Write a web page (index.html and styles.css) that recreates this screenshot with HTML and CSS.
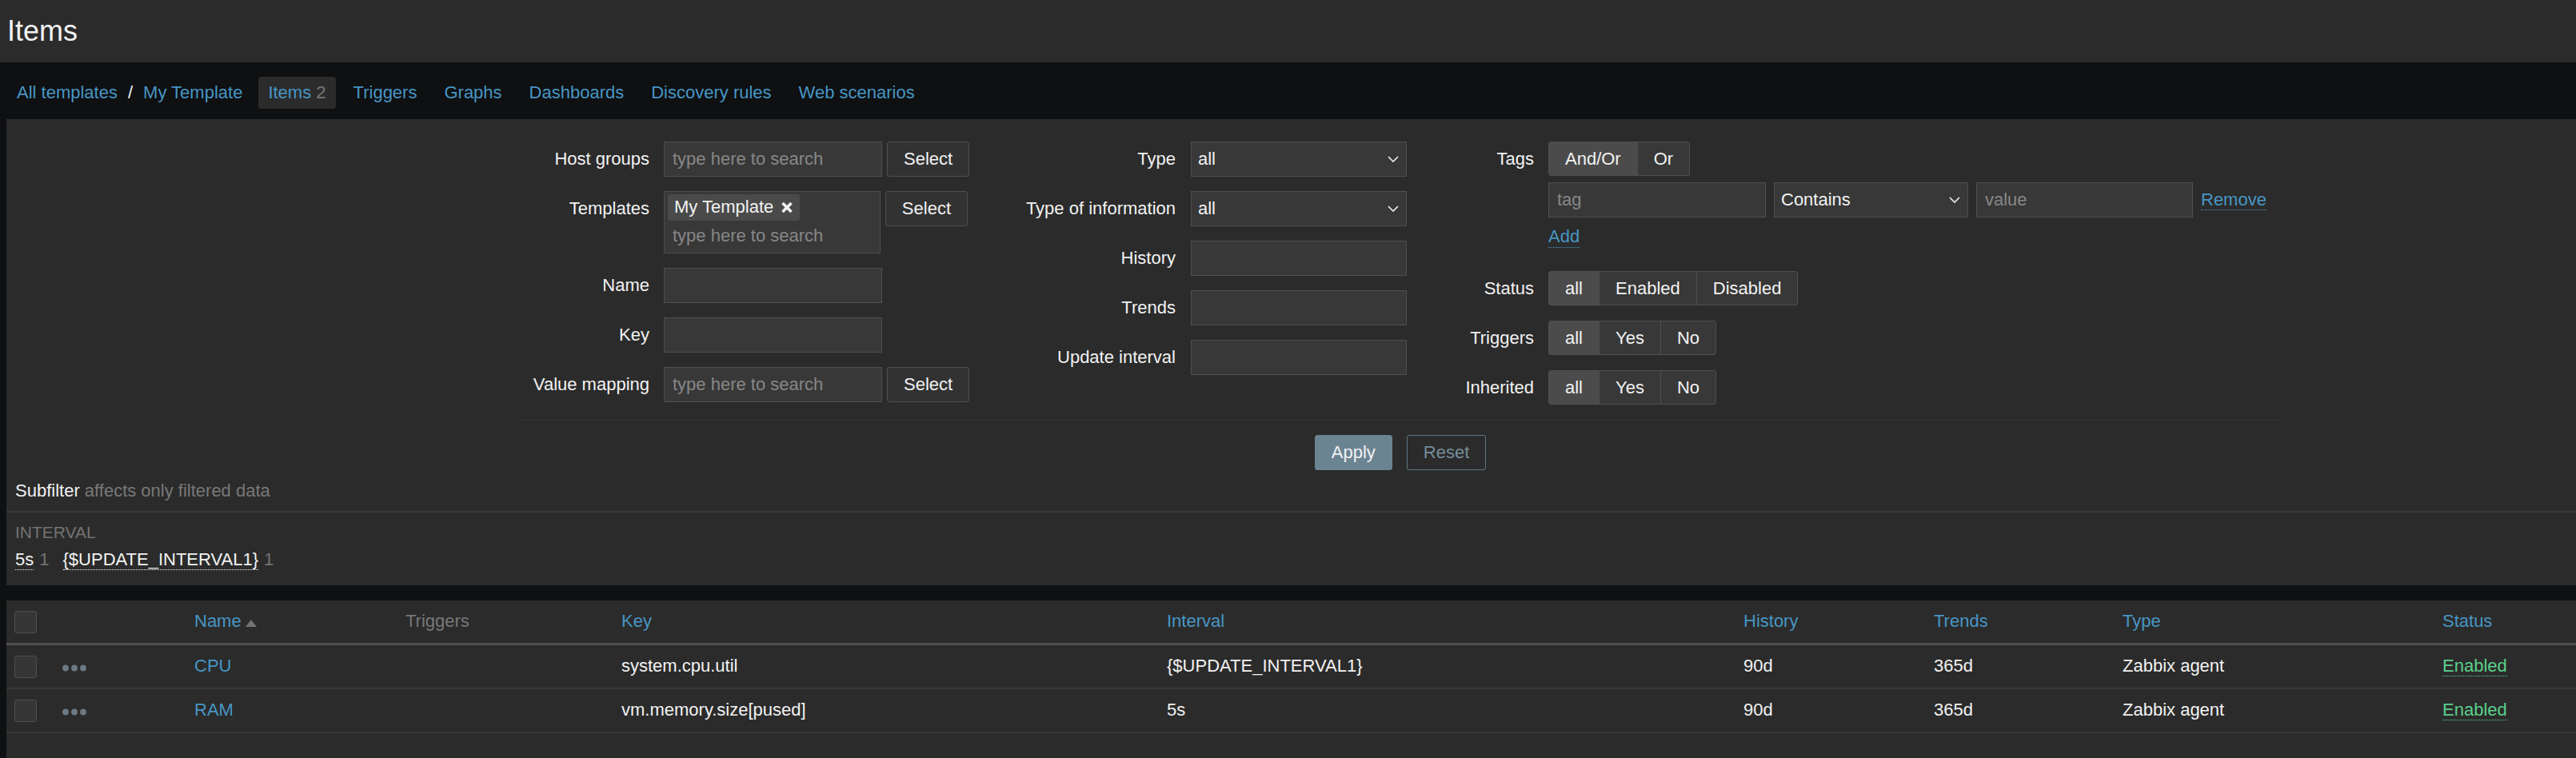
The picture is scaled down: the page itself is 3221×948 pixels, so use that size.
FILE: index.html
```html
<!DOCTYPE html>
<html lang="en">
<head>
<meta charset="utf-8">
<title>Items</title>
<link rel="stylesheet" href="styles.css">
</head>
<body>
<div class="page">
  <header class="header-title"><h1>Items</h1></header>

  <nav class="host-nav">
    <ul class="breadcrumbs">
      <li><a href="#">All templates</a></li>
      <li class="sep">/</li>
      <li><a href="#">My Template</a></li>
    </ul>
    <ul class="tabs">
      <li class="selected"><a href="#">Items</a> <span class="count">2</span></li>
      <li><a href="#">Triggers</a></li>
      <li><a href="#">Graphs</a></li>
      <li><a href="#">Dashboards</a></li>
      <li><a href="#">Discovery rules</a></li>
      <li><a href="#">Web scenarios</a></li>
    </ul>
  </nav>

  <main class="content">
    <section class="filter">
      <form class="filter-form">
        <div class="fcol col1">
          <label class="flabel">Host groups</label>
          <div class="field">
            <input class="input w273" type="text" placeholder="type here to search">
            <button type="button" class="btn-grey">Select</button>
          </div>

          <label class="flabel">Templates</label>
          <div class="field">
            <div class="multiselect">
              <span class="chip">My Template
                <svg class="chip-x" width="16" height="15" viewBox="0 0 16 15"><path d="M2.5 2l11 11M13.5 2l-11 11" stroke="#f2f2f2" stroke-width="3.6" stroke-linecap="butt"/></svg>
              </span>
              <input class="ms-input" type="text" placeholder="type here to search">
            </div>
            <button type="button" class="btn-grey">Select</button>
          </div>

          <label class="flabel">Name</label>
          <div class="field"><input class="input w273" type="text"></div>

          <label class="flabel">Key</label>
          <div class="field"><input class="input w273" type="text"></div>

          <label class="flabel">Value mapping</label>
          <div class="field">
            <input class="input w273" type="text" placeholder="type here to search">
            <button type="button" class="btn-grey">Select</button>
          </div>
        </div>

        <div class="fcol col2">
          <label class="flabel">Type</label>
          <div class="field">
            <div class="select w270"><span>all</span>
              <svg width="14" height="8" viewBox="0 0 14 8"><path d="M1 1l6 6 6-6" fill="none" stroke="#f2f2f2" stroke-width="1.6"/></svg>
            </div>
          </div>

          <label class="flabel">Type of information</label>
          <div class="field">
            <div class="select w270"><span>all</span>
              <svg width="14" height="8" viewBox="0 0 14 8"><path d="M1 1l6 6 6-6" fill="none" stroke="#f2f2f2" stroke-width="1.6"/></svg>
            </div>
          </div>

          <label class="flabel">History</label>
          <div class="field"><input class="input w270" type="text"></div>

          <label class="flabel">Trends</label>
          <div class="field"><input class="input w270" type="text"></div>

          <label class="flabel">Update interval</label>
          <div class="field"><input class="input w270" type="text"></div>
        </div>

        <div class="fcol col3">
          <label class="flabel">Tags</label>
          <div class="field tags-field">
            <div class="radio">
              <span class="on">And/Or</span><span>Or</span>
            </div>
            <div class="tag-row">
              <input class="input w272" type="text" placeholder="tag">
              <div class="select w243"><span>Contains</span>
                <svg width="14" height="8" viewBox="0 0 14 8"><path d="M1 1l6 6 6-6" fill="none" stroke="#f2f2f2" stroke-width="1.6"/></svg>
              </div>
              <input class="input w271" type="text" placeholder="value">
              <a href="#" class="link-action">Remove</a>
            </div>
            <div class="add-row"><a href="#" class="link-action">Add</a></div>
          </div>

          <label class="flabel">Status</label>
          <div class="field">
            <div class="radio"><span class="on">all</span><span>Enabled</span><span>Disabled</span></div>
          </div>

          <label class="flabel">Triggers</label>
          <div class="field">
            <div class="radio"><span class="on">all</span><span>Yes</span><span>No</span></div>
          </div>

          <label class="flabel">Inherited</label>
          <div class="field">
            <div class="radio"><span class="on">all</span><span>Yes</span><span>No</span></div>
          </div>
        </div>
      </form>

      <div class="filter-buttons">
        <button type="button" class="btn-apply">Apply</button>
        <button type="button" class="btn-alt">Reset</button>
      </div>

      <div class="subfilter-head">Subfilter <span class="muted">affects only filtered data</span></div>
      <div class="subfilter-body">
        <div class="subfilter-label">INTERVAL</div>
        <div class="subfilter-options">
          <span class="sf-option"><a href="#" class="sf-link">5s</a><span class="sf-count">1</span></span>
          <span class="sf-option"><a href="#" class="sf-link">{$UPDATE_INTERVAL1}</a><span class="sf-count">1</span></span>
        </div>
      </div>
    </section>

    <section class="list">
      <table class="list-table">
        <colgroup>
          <col class="c-cb"><col class="c-act"><col class="c-name"><col class="c-trig"><col class="c-key">
          <col class="c-int"><col class="c-hist"><col class="c-trend"><col class="c-type"><col class="c-status">
        </colgroup>
        <thead>
          <tr>
            <th><input type="checkbox" class="checkbox"></th>
            <th></th>
            <th><a href="#">Name</a><span class="arrow-up"></span></th>
            <th class="muted">Triggers</th>
            <th><a href="#">Key</a></th>
            <th><a href="#">Interval</a></th>
            <th><a href="#">History</a></th>
            <th><a href="#">Trends</a></th>
            <th><a href="#">Type</a></th>
            <th><a href="#">Status</a></th>
          </tr>
        </thead>
        <tbody>
          <tr>
            <td><input type="checkbox" class="checkbox"></td>
            <td><span class="dots"><svg width="30" height="9" viewBox="0 0 30 9"><circle cx="4" cy="4.5" r="3.9"/><circle cx="15" cy="4.5" r="3.9"/><circle cx="26" cy="4.5" r="3.9"/></svg></span></td>
            <td><a href="#">CPU</a></td>
            <td></td>
            <td>system.cpu.util</td>
            <td>{$UPDATE_INTERVAL1}</td>
            <td>90d</td>
            <td>365d</td>
            <td>Zabbix agent</td>
            <td><a href="#" class="status-on">Enabled</a></td>
          </tr>
          <tr>
            <td><input type="checkbox" class="checkbox"></td>
            <td><span class="dots"><svg width="30" height="9" viewBox="0 0 30 9"><circle cx="4" cy="4.5" r="3.9"/><circle cx="15" cy="4.5" r="3.9"/><circle cx="26" cy="4.5" r="3.9"/></svg></span></td>
            <td><a href="#">RAM</a></td>
            <td></td>
            <td>vm.memory.size[pused]</td>
            <td>5s</td>
            <td>90d</td>
            <td>365d</td>
            <td>Zabbix agent</td>
            <td><a href="#" class="status-on">Enabled</a></td>
          </tr>
        </tbody>
      </table>
    </section>
  </main>
</div>
</body>
</html>
```

FILE: styles.css
```css
* { box-sizing: border-box; }

html, body {
  margin: 0;
  padding: 0;
  overflow: hidden;
  background: #0e1012;
}

body {
  font: 22px/1.2 "Liberation Sans", Arial, sans-serif;
  color: #f2f2f2;
}

a { color: #4796c4; text-decoration: none; }
ul { list-style: none; margin: 0; padding: 0; }
button, input { font: inherit; margin: 0; }

.muted { color: #787878; }

.page { width: 3502px; }

/* header */
.header-title {
  height: 78px;
  background: #2b2b2b;
  display: flex;
  align-items: center;
  padding: 0 0 0 9px;
}
.header-title h1 {
  margin: 0;
  font-size: 36px;
  font-weight: normal;
  line-height: 1;
}

/* navigation */
.host-nav {
  height: 71px;
  display: flex;
  align-items: center;
  padding: 5px 0 0 21px;
}
.breadcrumbs { display: flex; align-items: center; margin-right: 20px; }
.breadcrumbs .sep { margin: 0 13px; color: #f2f2f2; }
.tabs { display: flex; align-items: center; gap: 10px; }
.tabs li {
  height: 40px;
  line-height: 40px;
  padding: 0 12px;
  border-radius: 4px;
}
.tabs li.selected { background: #2b2b2b; }
.tabs .count { color: #787878; }

/* content */
.content { margin: 0 8px; }

.filter { background: #2b2b2b; }

.filter-form {
  width: 2200px;
  margin: 0 auto;
  padding-top: 28px;
  display: flex;
  justify-content: space-between;
  align-items: flex-start;
}
.fcol {
  display: grid;
  row-gap: 18px;
  align-items: start;
}
.col1 { grid-template-columns: 161px 380px; column-gap: 18px; }
.col2 { grid-template-columns: 219px 270px; column-gap: 19px; }
.col3 { grid-template-columns: 118px 915px; column-gap: 18px; }

.flabel {
  line-height: 44px;
  text-align: right;
  white-space: nowrap;
}
.field {
  display: flex;
  align-items: flex-start;
  gap: 6px;
}

.input {
  height: 44px;
  background: #383838;
  border: 1px solid #4f4f4f;
  color: #f2f2f2;
  padding: 0 10px;
  outline: none;
}
.input::placeholder, .ms-input::placeholder { color: #878787; }
.w273 { width: 273px; }
.w272 { width: 272px; }
.w271 { width: 271px; }
.w270 { width: 270px; }
.w243 { width: 243px; }

.btn-grey {
  height: 44px;
  padding: 0 20px;
  background: #323232;
  border: 1px solid #4f4f4f;
  border-radius: 3px;
  color: #f2f2f2;
}

.multiselect {
  width: 273px;
  height: 78px;
  background: #383838;
  border: 1px solid #4f4f4f;
  padding: 3px 4px;
  display: flex;
  flex-direction: column;
  align-items: flex-start;
}
.chip {
  height: 33px;
  background: #4a4a4a;
  border-radius: 3px;
  padding: 0 8px;
  display: flex;
  align-items: center;
  gap: 9px;
  white-space: nowrap;
}
.ms-input {
  height: 37px;
  width: 100%;
  background: transparent;
  border: 0;
  padding: 0 6px;
  color: #f2f2f2;
  outline: none;
}

.select {
  height: 44px;
  background: #383838;
  border: 1px solid #4f4f4f;
  display: flex;
  align-items: center;
  justify-content: space-between;
  padding: 0 9px 0 8px;
}

.tags-field { flex-direction: column; gap: 0; }
.tag-row {
  display: flex;
  align-items: center;
  gap: 10px;
  margin-top: 8px;
}
.add-row {
  height: 49px;
  display: flex;
  align-items: center;
}
.link-action { border-bottom: 1px dotted #4796c4; line-height: 1.15; }

.radio {
  display: inline-flex;
  height: 43px;
  border: 1px solid #4f4f4f;
  border-radius: 3px;
  overflow: hidden;
  background: #383838;
}
.radio span {
  padding: 0 20px;
  line-height: 41px;
  border-left: 1px solid #4f4f4f;
}
.radio span:first-child { border-left: 0; }
.radio span.on { background: #4b4b4b; }

.filter-buttons {
  width: 2200px;
  margin: 18px auto 0;
  border-top: 1px solid #383838;
  padding-top: 18px;
  display: flex;
  justify-content: center;
  gap: 18px;
}
.btn-apply, .btn-alt {
  height: 44px;
  border-radius: 3px;
  padding: 0 20px;
}
.btn-apply {
  background: #6b8492;
  border: 1px solid #6b8492;
  color: #f2f2f2;
}
.btn-alt {
  background: transparent;
  border: 1px solid #5e7582;
  color: #768d99;
}

.subfilter-head {
  padding: 14px 11px 13px;
  line-height: 24px;
  border-bottom: 2px solid #383838;
}
.subfilter-body { padding: 12px 11px 19px; }
.subfilter-label {
  font-size: 21px;
  line-height: 26px;
  color: #737373;
}
.subfilter-options {
  margin-top: 8px;
  line-height: 26px;
  display: flex;
  gap: 17px;
}
.sf-link { color: #f2f2f2; border-bottom: 1px dotted #f2f2f2; line-height: 1.15; }
.sf-count { color: #737373; margin-left: 7px; }

/* list */
.list {
  margin-top: 19px;
  background: #2b2b2b;
  min-height: 197px;
}
.list-table {
  width: 100%;
  table-layout: fixed;
  border-collapse: separate;
  border-spacing: 0;
}
.c-cb { width: 60px; }
.c-act { width: 165px; }
.c-name { width: 264px; }
.c-trig { width: 270px; }
.c-key { width: 682px; }
.c-int { width: 721px; }
.c-hist { width: 238px; }
.c-trend { width: 236px; }
.c-type { width: 400px; }
.c-status { width: auto; }

.list-table th, .list-table td {
  padding: 0 10px;
  text-align: left;
  font-weight: normal;
  vertical-align: middle;
  white-space: nowrap;
}
.list-table thead th {
  height: 56px;
  border-bottom: 3px solid #4f4f4f;
}
.list-table td {
  height: 55px;
  border-bottom: 2px solid #383838;
}

.checkbox {
  appearance: none;
  -webkit-appearance: none;
  width: 28px;
  height: 28px;
  margin: 0;
  display: block;
  background: #363636;
  border: 1px solid #4f4f4f;
  border-radius: 3px;
}

.arrow-up {
  display: inline-block;
  margin-left: 5px;
  border-left: 7px solid transparent;
  border-right: 7px solid transparent;
  border-bottom: 9px solid #737373;
}

.dots { display: inline-block; padding-top: 8px; }
.dots svg { display: block; fill: #6b7a85; }

.status-on { color: #59d08a; border-bottom: 1px dotted #59d08a; line-height: 1.15; }
```
